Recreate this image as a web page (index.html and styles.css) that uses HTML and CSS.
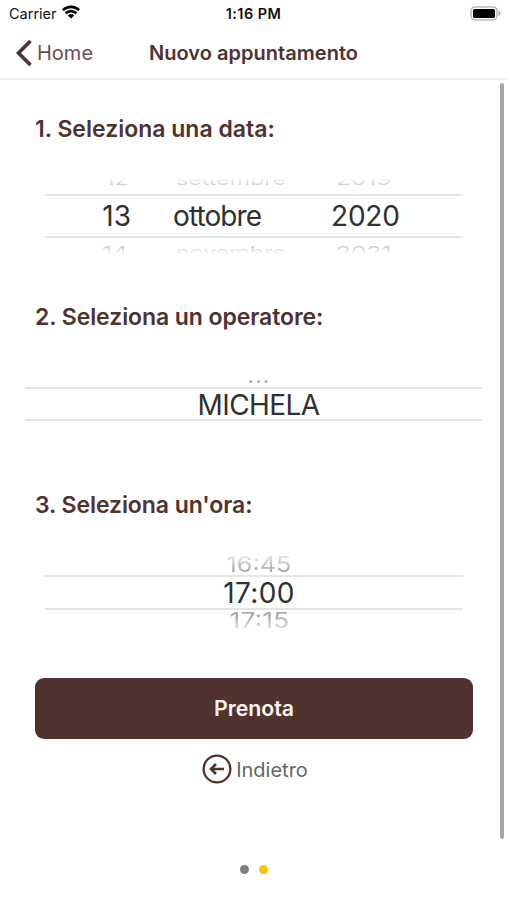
FILE: index.html
```html
<!DOCTYPE html>
<html lang="it">
<head>
<meta charset="utf-8">
<title>Nuovo appuntamento</title>
<link rel="stylesheet" href="styles.css">
</head>
<body>
<div class="status">
  <div class="carrier"><span class="carrier-name">Carrier</span>
    <svg class="wifi" viewBox="0 0 18 14" width="18" height="14"><path d="M9 13.500 5.800 10.400a4.600 4.600 0 0 1 6.400 0z" fill="#000"/><path d="M3.600 8.300a7.800 7.800 0 0 1 10.800 0M.900 5.100a11.800 11.800 0 0 1 16.200 0" fill="none" stroke="#000" stroke-width="2.600"/></svg>
  </div>
  <div class="clock">1:16 PM</div>
  <svg class="battery" viewBox="0 0 31 15" width="31" height="15"><rect x="1" y="1" width="26" height="13" rx="4" fill="#fff" stroke="#bbb" stroke-width="1.6"/><rect x="3" y="3" width="22" height="9" rx="1.6" fill="#000"/><path d="M28.5 5q2 .8 2 2.500t-2 2.500z" fill="#aaa"/></svg>
</div>
<header class="nav">
  <a class="back"><svg viewBox="0 0 17 28" width="17" height="28"><path d="M15.500 2 3.500 14l12 12" fill="none" stroke="#50322f" stroke-width="3.600"/></svg><span class="back-label">Home</span></a>
  <h1 class="title"><span>Nuovo appuntamento</span></h1>
</header>
<main class="content">
  <section class="step">
    <h2 class="h-date">1. Seleziona una data:</h2>
    <div class="picker date">
      <div class="row prev"><span class="day">12</span><span class="month">settembre</span><span class="year">2019</span></div>
      <div class="row current"><span class="day">13</span><span class="month">ottobre</span><span class="year">2020</span></div>
      <div class="row next"><span class="day">14</span><span class="month">novembre</span><span class="year">2021</span></div>
    </div>
  </section>
  <section class="step">
    <h2 class="h-operator">2. Seleziona un operatore:</h2>
    <div class="picker operator">
      <div class="row prev"><span>...</span></div>
      <div class="row current"><span>MICHELA</span></div>
    </div>
  </section>
  <section class="step">
    <h2 class="h-time">3. Seleziona un'ora:</h2>
    <div class="picker time">
      <div class="row prev"><span>16:45</span></div>
      <div class="row current"><span>17:00</span></div>
      <div class="row next"><span>17:15</span></div>
    </div>
  </section>
  <button class="book"><span>Prenota</span></button>
  <a class="previous"><svg viewBox="0 0 30 30" width="30" height="30"><circle cx="15" cy="15" r="13.400" fill="none" stroke="#50322f" stroke-width="2.300"/><path d="M22 15H9M14 10 9 15l5 5" fill="none" stroke="#50322f" stroke-width="2.600"/></svg><span>Indietro</span></a>
  <div class="scrollbar"></div>
</main>
<footer class="pages"><i class="dot"></i><i class="dot active"></i></footer>
</body>
</html>
```
FILE: styles.css
```css
* { box-sizing: border-box; }
body {
  margin: 0;
  width: 507px;
  height: 900px;
  overflow: hidden;
  background: #fff;
  color: #50322f;
  font-family: Inter, "Liberation Sans", sans-serif;
  white-space: nowrap;
}
.status {
  display: grid;
  grid-template-columns: 1fr auto 1fr;
  align-items: center;
  height: 27px;
  padding: 0 6px 0 9px;
  color: #111;
}
.carrier { display: flex; align-items: center; gap: 6px; font-size: 14.500px; }
.wifi { margin: -3px 0 0 -1px; }
.clock { margin-right: 3px; font-size: 14.500px; font-weight: 600; letter-spacing: .45px; }
.battery { justify-self: end; }
.nav {
  display: grid;
  grid-template-columns: 1fr auto 1fr;
  align-items: center;
  height: 53px;
  padding: 0 15px;
  border-bottom: 2px solid #efefef;
}
.back { display: flex; align-items: center; gap: 5px; font-size: 20px; color: #65504e; }
.title { margin: 0; font-size: 20px; font-weight: 600; letter-spacing: .03px; }
.content { position: relative; height: 760px; padding: 33px 34px 0 35px; }
.step { height: 188px; }
h2 { margin: 0; padding-top: 2px; font-size: 23px; line-height: 28px; font-weight: 600; }
.h-operator, .h-time { letter-spacing: -.08px; }
.picker { color: #303030; font-size: 28px; }
.row { display: flex; justify-content: center; overflow: hidden; }
.row span { display: block; line-height: 40px; }
.current { align-items: center; border: solid #e5e5e5; border-width: 2px 0; }
.prev, .next { color: #aaa; }
.date { margin: 35px 10px 0; }
.date .row { display: grid; grid-template-columns: 86px 42px 159px 1fr; }
.date .day { text-align: right; }
.date .month { grid-column: 3; }
.date .year { margin-left: -1px; }
.date .current .month { letter-spacing: -.9px; }
.date .current .year { letter-spacing: -.2px; }
.date .prev, .date .next { height: 16px; color: #bbb; }
.date .prev span, .date .next span { line-height: 16px; transform-origin: left; }
.date .prev .day, .date .next .day { transform-origin: right; }
.date .prev { -webkit-mask-image: linear-gradient(transparent, #000 60%); mask-image: linear-gradient(transparent, #000 60%); }
.date .next { -webkit-mask-image: linear-gradient(#000 40%, transparent); mask-image: linear-gradient(#000 40%, transparent); }
.date .current { height: 44px; }
.date .prev span { transform: translate(3px, -6.500px) scale(.83, .56); }
.date .prev .year { transform: translate(5px, -6.500px) scale(.88, .56); }
.date .prev .day { transform: translate(-2px, -6.500px) scale(.83, .56); }
.date .next span { transform: translate(3px, 6px) scale(.83, .58); }
.date .next .year { transform: translate(5px, 6px) scale(.88, .58); }
.date .next .day { transform: translate(-3px, 6px) scale(.87, .58); }
.operator { margin: 30px -9px 0 -10px; padding-top: 6px; }
.operator .row { padding-left: 10px; }
.operator .prev { height: 20px; }
.operator .prev span { line-height: 14px; font-size: 26px; font-weight: 300; letter-spacing: .3px; }
.operator .current { height: 34px; }
.operator .current span { line-height: 30px; letter-spacing: -.6px; transform: translateY(1px); }
.time { margin: 37px 10px 0; }
.time .row { padding-left: 10px; }
.time .prev { height: 19px; -webkit-mask-image: linear-gradient(rgba(0,0,0,.3), #000 80%); mask-image: linear-gradient(rgba(0,0,0,.3), #000 80%); }
.time .current { height: 35px; }
.time .current span { line-height: 31px; letter-spacing: .4px; transform: translateY(1px); }
.time .next { height: 20px; -webkit-mask-image: linear-gradient(#000 30%, rgba(0,0,0,.3)); mask-image: linear-gradient(#000 30%, rgba(0,0,0,.3)); }
.time .prev span { line-height: 19px; transform: translateY(-.5px) scale(.9, .78); }
.time .next span { line-height: 20px; transform: scale(.95, .78); }
.book {
  display: block;
  width: 438px;
  height: 61px;
  margin: 1px 0 0;
  padding: 0 0 2px;
  border: 0;
  border-radius: 9px;
  background: #50322f;
  color: #fff5ef;
  font: 600 21.300px Inter, sans-serif;
}
.previous { display: flex; justify-content: center; align-items: center; gap: 4px; margin-top: 15px; padding-left: 2px; font-size: 20px; color: #666; }
.previous span { margin-top: 2px; }
.scrollbar { position: absolute; right: 3px; top: 3px; width: 4px; height: 756px; border-radius: 2px; background: #a6a6a6; }
.pages { display: flex; justify-content: center; gap: 10px; height: 59px; align-items: center; padding-left: 1px; }
.dot { width: 9px; height: 9px; border-radius: 50%; background: #7f7f7f; }
.dot.active { background: #ffc107; }
```
